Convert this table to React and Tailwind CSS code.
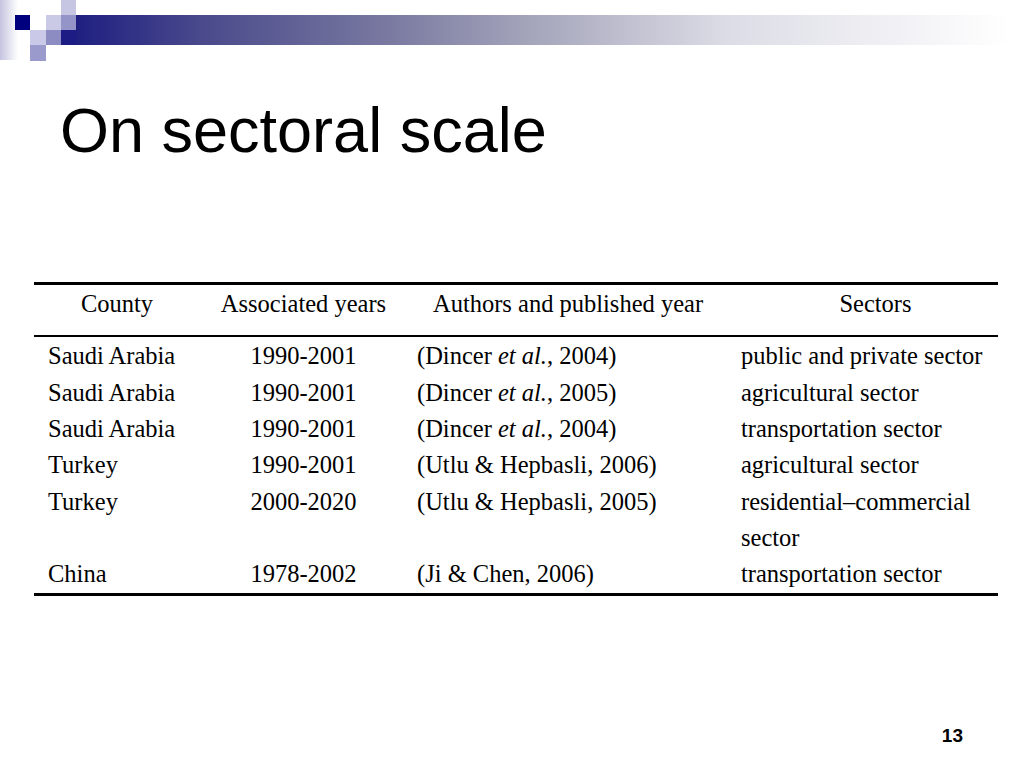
const rows = [
  { country: 'Saudi Arabia', years: '1990-2001', author: 'Dincer', etal: true, year: '2004', sector: 'public and private sector' },
  { country: 'Saudi Arabia', years: '1990-2001', author: 'Dincer', etal: true, year: '2005', sector: 'agricultural sector' },
  { country: 'Saudi Arabia', years: '1990-2001', author: 'Dincer', etal: true, year: '2004', sector: 'transportation sector' },
  { country: 'Turkey', years: '1990-2001', author: 'Utlu & Hepbasli', year: '2006', sector: 'agricultural sector' },
  { country: 'Turkey', years: '2000-2020', author: 'Utlu & Hepbasli', year: '2005', sector: 'residential–commercial', wrap: 'sector' },
  { country: 'China', years: '1978-2002', author: 'Ji & Chen', year: '2006', sector: 'transportation sector' },
]

function Logo() {
  return (
    <svg width="1024" height="62" viewBox="0 0 1024 62" className="block">
      <defs>
        <linearGradient id="bar" gradientUnits="userSpaceOnUse" x1="61" y1="0" x2="1010" y2="0">
          <stop offset="0" stopColor="#1a1a80" />
          <stop offset="0.15" stopColor="#4a4a8c" />
          <stop offset="0.34" stopColor="#7878a0" />
          <stop offset="0.5" stopColor="#a6a6bc" />
          <stop offset="0.7" stopColor="#dcdce6" />
          <stop offset="1" stopColor="#ffffff" />
        </linearGradient>
        <linearGradient id="fade" x1="0" y1="0" x2="1" y2="0">
          <stop offset="0" stopColor="#c4c4e0" />
          <stop offset="1" stopColor="#ffffff" />
        </linearGradient>
      </defs>
      <rect x="0" y="0" width="18" height="60" fill="url(#fade)" />
      <rect x="76" y="15" width="948" height="30" fill="url(#bar)" />
      <rect x="61" y="30" width="15" height="15" fill="#1c1c84" />
      <rect x="15" y="15" width="15" height="15" fill="#00007f" />
      <rect x="61" y="0" width="15" height="15" fill="#c6c6e2" />
      <rect x="46" y="15" width="15" height="15" fill="#cacae6" />
      <rect x="61" y="15" width="15" height="15" fill="#9494c8" />
      <rect x="30" y="30" width="16" height="15" fill="#cacae8" />
      <rect x="46" y="30" width="15" height="15" fill="#8c8cc2" />
      <rect x="30" y="45" width="16" height="16" fill="#9a9acc" />
    </svg>
  )
}

export default function App() {
  return (
    <div className="w-[1024px] h-[768px] bg-white flex flex-col overflow-hidden">
      <Logo />

      {/* Title */}
      <h1 className="mt-[37px] pl-[60px] text-[63px] leading-[63px] text-black font-['Liberation_Sans',Arial,sans-serif]">
        On sectoral scale
      </h1>

      {/* Table */}
      <div className="mt-[120px] mx-[34px] w-[964px] font-['Liberation_Serif','Times_New_Roman',serif] text-[24.5px] leading-[36.33px] text-black">
        <div className="h-[3px] bg-black" />
        <div className="grid grid-cols-[166px_207px_322px_269px] pt-[1px] pb-[13px]">
          <div className="text-center">County</div>
          <div className="text-center">Associated years</div>
          <div className="text-center">Authors and published year</div>
          <div className="text-center pl-[24px]">Sectors</div>
        </div>
        <div className="h-[2px] bg-black" />
        <div className="pt-[1px]">
          {rows.map((r, i) => (
            <div key={i} className="grid grid-cols-[166px_207px_322px_269px]">
              <div className="pl-[14px]">{r.country}</div>
              <div className="text-center">{r.years}</div>
              <div className="pl-[10px]">
                ({r.author}
                {r.etal && (
                  <>
                    {' '}<i>et al.</i>
                  </>
                )}
                , {r.year})
              </div>
              <div className="pl-[12px] whitespace-nowrap">
                {r.sector}
                {r.wrap && (
                  <>
                    <br />
                    {r.wrap}
                  </>
                )}
              </div>
            </div>
          ))}
        </div>
        <div className="h-[3px] bg-black" />
      </div>

      <div className="flex-1" />

      {/* Page number */}
      <div className="flex justify-end pr-[61px] pb-[23px]">
        <span className="text-[19px] leading-[19px] font-bold text-black font-['Liberation_Sans',Arial,sans-serif]">13</span>
      </div>
    </div>
  )
}
